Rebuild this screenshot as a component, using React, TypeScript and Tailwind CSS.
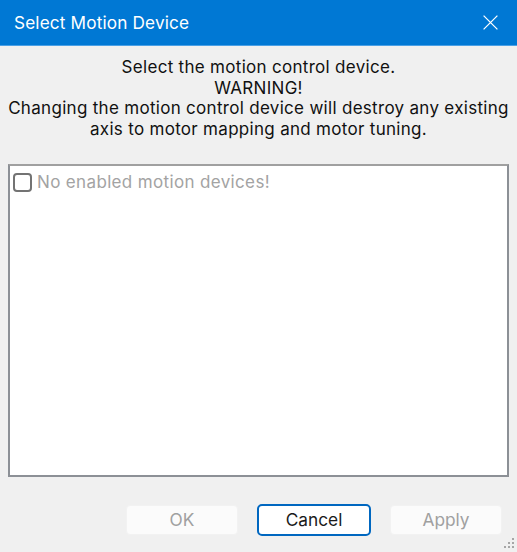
import React from "react";

function CloseIcon() {
  return (
    <svg width="17" height="17" viewBox="0 0 16 16" fill="none" stroke="white" strokeWidth="1.2">
      <path d="M1.5 1.5 L14.5 14.5 M14.5 1.5 L1.5 14.5" />
    </svg>
  );
}

function Grip() {
  const dots = [
    [9, 0],
    [5, 4],
    [9, 4],
    [1, 8],
    [5, 8],
    [9, 8],
  ];
  return (
    <svg width="12" height="12" viewBox="0 0 12 12">
      {dots.map(([x, y], i) => (
        <rect key={i} x={x} y={y} width="2" height="2" fill="#a6a6a6" />
      ))}
    </svg>
  );
}

export default function App() {
  return (
    <div
      className="w-[517px] h-[552px] bg-[#f0f0f0] flex flex-col relative overflow-hidden"
      style={{ fontFamily: 'Inter, "Noto Sans", sans-serif' }}
    >
      <div className="h-[46px] bg-[#0078d4] flex items-center justify-between pl-[14px] pr-[18px] border-b border-[#4aa0e6]">
        <span className="text-white text-[17.2px] tracking-[0.15px]">Select Motion Device</span>
        <CloseIcon />
      </div>

      <div className="flex flex-col items-center text-center text-[#111] text-[17px] leading-[20.7px] tracking-[0.3px] mt-[11px]">
        <span>Select the motion control device.</span>
        <span>WARNING!</span>
        <span className="whitespace-nowrap">Changing the motion control device will destroy any existing</span>
        <span>axis to motor mapping and motor tuning.</span>
      </div>

      <div className="mx-[8px] mt-[24px] h-[313px] bg-white border-2 border-[#8c9096] border-t-[#a0a0a0] pl-[3px] pt-[7px]">
        <div className="flex items-center gap-[5px]">
          <div className="w-[19px] h-[19px] rounded-[4px] border-2 border-[#737373] bg-white" />
          <span className="text-[#a3a3a3] text-[17px] leading-[19px] tracking-[0.35px]">No enabled motion devices!</span>
        </div>
      </div>

      <div className="flex justify-end gap-[19px] mt-[28px] pr-[15px]">
        <button className="w-[112px] h-[30px] rounded-[4px] bg-[#fbfbfb] border border-[#f2f2f2] text-[#a0a0a0] text-[17.3px]">
          OK
        </button>
        <button className="w-[114px] h-[32px] -mt-[1px] rounded-[5px] bg-white border-2 border-[#0067c0] text-[#1a1a1a] text-[17.3px]">
          Cancel
        </button>
        <button className="w-[112px] h-[30px] rounded-[4px] bg-[#fbfbfb] border border-[#f2f2f2] text-[#a0a0a0] text-[17.3px]">
          Apply
        </button>
      </div>

      <div className="absolute right-[2px] bottom-[2px]">
        <Grip />
      </div>
    </div>
  );
}
